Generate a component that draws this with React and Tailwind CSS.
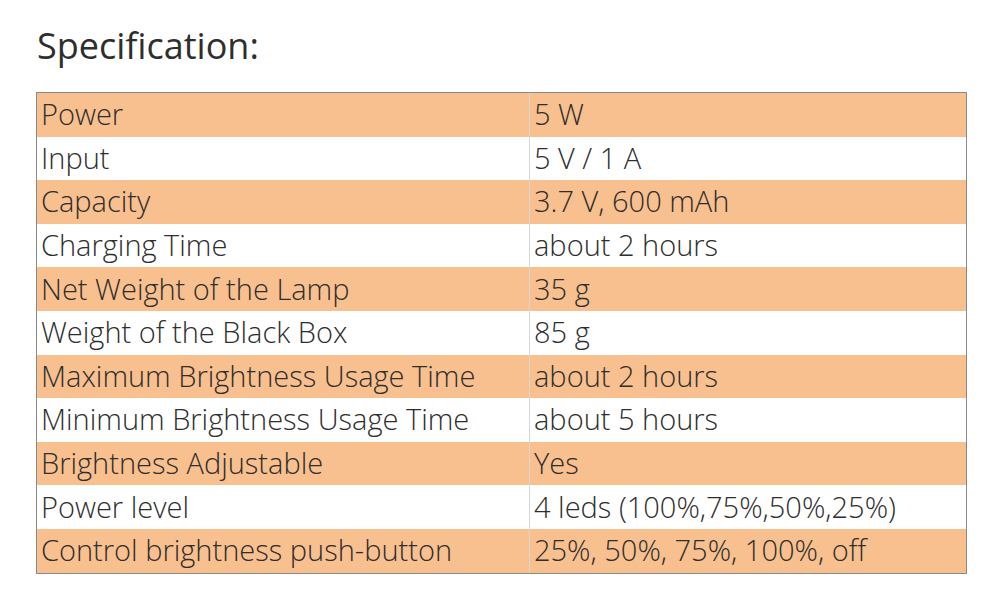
const SPECS = [
  ['Power', '5 W'],
  ['Input', '5 V / 1 A'],
  ['Capacity', '3.7 V, 600 mAh'],
  ['Charging Time', 'about 2 hours'],
  ['Net Weight of the Lamp', '35 g'],
  ['Weight of the Black Box', '85 g'],
  ['Maximum Brightness Usage Time', 'about 2 hours'],
  ['Minimum Brightness Usage Time', 'about 5 hours'],
  ['Brightness Adjustable', 'Yes'],
  ['Power level', '4 leds (100%,75%,50%,25%)'],
  ['Control brightness push-button', '25%, 50%, 75%, 100%, off'],
];

export default function App() {
  return (
    <div
      className="w-[1000px] h-[602px] bg-white text-[#2e2e2e] pt-[22px]"
      style={{ fontFamily: '"Open Sans", "Noto Sans", sans-serif' }}
    >
      <h2 className="ml-[37px] text-[36px] leading-[48px] font-normal">Specification:</h2>
      <div className="ml-[36px] mt-[22px] w-[931px] border border-[#8a8a8a]">
        {SPECS.map(([label, value], i) => (
          <div
            key={label}
            className={`flex h-[43.6px] items-center text-[29px] font-light leading-none ${
              i % 2 === 0 ? 'bg-[#f8c08f]' : 'bg-white'
            }`}
          >
            <div className="w-[493px] h-full flex items-center pl-[4px] pb-[2px] border-r border-[#d6d6d6]">
              {label}
            </div>
            <div className="flex-1 h-full flex items-center pl-[4px] pb-[2px]">{value}</div>
          </div>
        ))}
      </div>
    </div>
  );
}
